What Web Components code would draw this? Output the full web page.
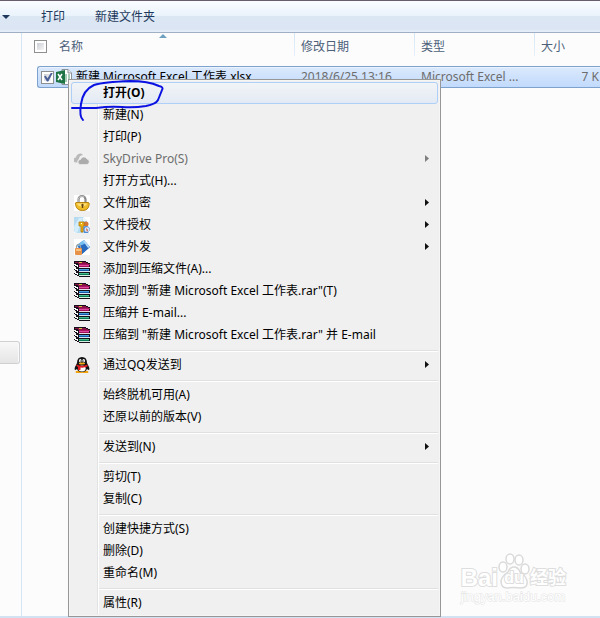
<!DOCTYPE html>
<html lang="zh-CN">
<head>
<meta charset="utf-8">
<title>新建 Microsoft Excel 工作表.xlsx</title>
<style>
  body {
    margin: 0;
    background: #fcfcfc;
    font: 12px/16px "Noto Sans", "Noto Sans CJK SC", sans-serif;
    color: #000;
    overflow: hidden;
  }
</style>
</head>
<body>
<explorer-window>
  <tool-bar slot="toolbar"></tool-bar>
  <nav-pane slot="nav"></nav-pane>
  <file-list></file-list>
  <context-menu slot="overlay">
    <menu-item active>打开(O)</menu-item>
    <menu-item>新建(N)</menu-item>
    <menu-item>打印(P)</menu-item>
    <menu-item icon="cloud" submenu disabled>SkyDrive Pro(S)</menu-item>
    <menu-item>打开方式(H)...</menu-item>
    <menu-item icon="lock" submenu>文件加密</menu-item>
    <menu-item icon="key" submenu>文件授权</menu-item>
    <menu-item icon="send" submenu>文件外发</menu-item>
    <menu-item icon="rar">添加到压缩文件(A)...</menu-item>
    <menu-item icon="rar">添加到 "新建 Microsoft Excel 工作表.rar"(T)</menu-item>
    <menu-item icon="rar">压缩并 E-mail...</menu-item>
    <menu-item icon="rar">压缩到 "新建 Microsoft Excel 工作表.rar" 并 E-mail</menu-item>
    <menu-separator></menu-separator>
    <menu-item icon="qq" submenu>通过QQ发送到</menu-item>
    <menu-separator></menu-separator>
    <menu-item>始终脱机可用(A)</menu-item>
    <menu-item>还原以前的版本(V)</menu-item>
    <menu-separator></menu-separator>
    <menu-item submenu>发送到(N)</menu-item>
    <menu-separator></menu-separator>
    <menu-item>剪切(T)</menu-item>
    <menu-item>复制(C)</menu-item>
    <menu-separator></menu-separator>
    <menu-item>创建快捷方式(S)</menu-item>
    <menu-item>删除(D)</menu-item>
    <menu-item>重命名(M)</menu-item>
    <menu-separator></menu-separator>
    <menu-item>属性(R)</menu-item>
  </context-menu>
  <pen-mark slot="overlay"></pen-mark>
  <site-watermark slot="overlay"></site-watermark>
</explorer-window>

<script>
const ICONS = {
  cloud: `
    <path d="M2 11.500a2.500 2.500 0 0 1 0-5 4 4 0 0 1 7-2.500q-4 .5-4 4-2 1-1.500 3.500z" fill="#b9b9b9"/>
    <path d="M6.500 13.500a2.500 2.500 0 0 1 0-5 3.500 3.500 0 0 1 6.500-.5 2.800 2.800 0 0 1 0 5.500z" fill="#acacac" stroke="#efefef" stroke-width=".7"/>`,
  lock: `
    <rect width="16" height="16" fill="#fff"/>
    <path d="M4.500 8V4.500a3.500 3.500 0 0 1 7 0V8" fill="none" stroke="#8b8b8b" stroke-width="2.200"/>
    <path d="M4.200 8V4.500a3.700 3.700 0 0 1 6-2.500" fill="none" stroke="#d5d5d5" stroke-width=".8"/>
    <path d="M2 7.500h12q1.500 0 1.200 2Q14.500 15.500 8.500 15.500T1.500 9.500Q1 7.500 2 7.500z" fill="#efbd28" stroke="#b88413"/>
    <path d="M3 8.500h10q-1 3-5 3T3 8.500z" fill="#ffe17a"/>
    <path d="M8.500 8.800a1.300 1.300 0 0 1 .7 2.300v2H7.800v-2a1.300 1.300 0 0 1 .7-2.300z" fill="#654312"/>`,
  key: `
    <rect width="16" height="16" fill="#fff"/>
    <path d="M0 0h9l4 4v12H2L0 14z" fill="#b7dcf2"/>
    <path d="M0 10l5-9 4 0-6 15H1z" fill="#d4edfa"/>
    <path d="M9 0v4h4z" fill="#eef8fd"/>
    <circle cx="12" cy="7" r="2.500" fill="#d47837"/>
    <path d="M9 12q0-3 3-3 4 0 4 4l-2 3h-4z" fill="#4e8ed8"/>
    <circle cx="13" cy="12.500" r="2.500" fill="#d8e5f3"/>
    <path d="M5 5h5v4H9v6H7V9H5z" fill="#edb413" stroke="#b57a0c" stroke-width=".8"/>
    <rect x="7" y="6" width="1" height="1" fill="#fff"/>
    <path d="M12 11l2 2-1 2z" fill="#d44c35"/>`,
  send: `
    <rect width="16" height="16" fill="#fff"/>
    <path d="M3 6l7-5 6 7-8 7z" fill="#2e79ce"/>
    <path d="M3 6l7-5 2 3-8 4z" fill="#77bff1"/>
    <path d="M4 7q5 0 8-3l4 4-8 7z" fill="#296abf"/>
    <path d="M10 1l6 7-2 1-5-7z" fill="#b8dcf4"/>
    <path d="M2.500 10V7.500a2 2 0 0 1 4 0V10" fill="none" stroke="#9a9d9f" stroke-width="1.200"/>
    <rect x="1" y="9" width="7" height="7" rx="1" fill="#e6924b"/>
    <rect x="2" y="10" width="5" height="2" fill="#fac381"/>`,
  rar: `
    <g shape-rendering="crispEdges">
      <path d="M0 0h12v1h2v1h2v14H5v-1H3v-1H1v-1H0z" fill="#15101a"/>
      <path d="M1 1h11v1h2v1H4V2H1z" fill="#8a1048"/>
      <path d="M5 1h3v1H5z" fill="#d8c840"/>
      <path d="M5 3h11v1H5z" fill="#a81862"/>
      <path d="M5 4h10v1H5z" fill="#e048a0"/>
      <path d="M5 6h11v1H5z" fill="#e8e0e8"/>
      <path d="M5 5h10v1H5z" fill="#a01058"/>
      <path d="M5 8h10v1H5z" fill="#48a0e0"/>
      <path d="M5 9h10v1H5z" fill="#1458a8"/>
      <path d="M5 10h11v1H5z" fill="#d8e4f0"/>
      <path d="M5 12h10v1H5z" fill="#48c090"/>
      <path d="M5 13h10v1H5z" fill="#087850"/>
      <path d="M5 14h11v1H5z" fill="#d8f0e4"/>
      <path d="M0 3h2v1h2v2H3V5H1V4H0zM0 7h2v1h2v2H3V9H1V8H0zM0 11h2v1h2v2H3v-1H1v-1H0z" fill="#fff"/>
      <path d="M0 5h1v1h1v1H0zM0 9h1v1h1v1H0zM0 13h1v1h2v1h2v1H0z" fill="#f0f0f0"/>
    </g>`,
  qq: `
    <ellipse cx="5" cy="15" rx="3.500" ry="1.300" fill="#f1a10b"/>
    <ellipse cx="11" cy="15" rx="3.500" ry="1.300" fill="#f1a10b"/>
    <path d="M3 6Q3 0 8 0t5 6l2 4q1 3-.5 3L13 12q-1 3-5 3t-5-3l-1.500 1Q0 13 1 10z" fill="#111"/>
    <ellipse cx="8" cy="11.500" rx="3.700" ry="3" fill="#fff"/>
    <ellipse cx="6.300" cy="3.800" rx="1.300" ry="1.800" fill="#fff"/>
    <ellipse cx="9.700" cy="3.800" rx="1.300" ry="1.800" fill="#fff"/>
    <circle cx="6.700" cy="4" r=".6"/><circle cx="9.300" cy="4" r=".6"/>
    <ellipse cx="8" cy="6.500" rx="3.200" ry="1.100" fill="#f5ac16"/>
    <path d="M2.500 7.500Q8 10 13.500 7.500v2Q10 11 6.500 10.500V13H4v-3l-1.500-1z" fill="#e21b22"/>`
}

class BaseElement extends HTMLElement {

  constructor() {
    super()
    const template = document.createElement('template')
    template.innerHTML = this.template()
    this.attachShadow({ mode: 'open' }).appendChild(template.content)
  }

}

class ExplorerWindow extends BaseElement {

  template() {
    return `
      <style>
        :host {
          display: flex;
          flex-direction: column;
          min-height: 100vh;
          position: relative;
        }
        main {
          display: flex;
          flex: 1;
          min-width: 0;
        }
        footer {
          background: #d3e2f3;
          height: 2px;
        }
      </style>
      <slot name="toolbar"></slot>
      <main><slot name="nav"></slot><slot></slot></main>
      <footer></footer>
      <slot name="overlay"></slot>
    `
  }

}

class ToolBar extends BaseElement {

  template() {
    return `
      <style>
        :host {
          align-items: center;
          background: linear-gradient(#fafcff, #e9f2fb 50%, #dce7f4 50%, #dbe5f3 90%, #e6effa);
          border-bottom: 1px solid #a0afc3;
          border-top: 1px solid #695d6b;
          box-sizing: border-box;
          display: flex;
          height: 33px;
        }
        button {
          background: none;
          border: 0;
          color: #1e395b;
          font: inherit;
          padding: 0 15px;
        }
        .more {
          display: flex;
          padding: 0 16px 0 2px;
        }
      </style>
      <button class="more" aria-label="更多"><svg width="8" height="4"><path d="M0 0h8l-4 4z" fill="#1e395b"/></svg></button>
      <button>打印</button>
      <button>新建文件夹</button>
    `
  }

}

class NavPane extends BaseElement {

  template() {
    return `
      <style>
        :host {
          border-right: 1px solid #d6e5f5;
          box-sizing: border-box;
          flex: none;
          padding: 308px 1px 0 0;
          width: 22px;
        }
        div {
          background: linear-gradient(#f8f8f8, #e5e5e5);
          border: 1px solid #d0d0d0;
          border-left: 0;
          border-radius: 0 3px 3px 0;
          box-shadow: inset -1px 0 #fafafa;
          box-sizing: border-box;
          height: 23px;
        }
      </style>
      <div></div>
    `
  }

}

class FileList extends BaseElement {

  template() {
    return `
      <style>
        :host {
          display: block;
          flex: 1;
          min-width: 0;
          overflow: hidden;
        }
        table {
          border-spacing: 0;
          table-layout: fixed;
          width: 100%;
        }
        .name { width: 273px; }
        .meta { width: 120px; }
        th, td {
          padding: 0;
          text-align: left;
          white-space: nowrap;
        }
        th {
          color: #4c607a;
          font-weight: normal;
          height: 33px;
          position: relative;
          vertical-align: top;
        }
        th div {
          align-items: center;
          border-right: 1px solid;
          border-image: linear-gradient(#d5e5f5, #e9f1fa) 1;
          box-sizing: border-box;
          display: flex;
          gap: 12px;
          height: 23px;
          padding: 4px 0 0 6px;
        }
        th:first-child div { padding-left: 12px; }
        th:last-child div { border: 0; }
        .sort {
          left: 50%;
          position: absolute;
          top: 1px;
        }
        td div {
          align-items: center;
          background: linear-gradient(#dbe9fc, #c1dafc);
          border: solid #7da2ce;
          border-width: 1px 0;
          box-shadow: inset 0 1px #eaf3fe;
          box-sizing: border-box;
          color: #6d6d6d;
          display: flex;
          height: 22px;
          padding: 0 6px;
        }
        td:first-child div {
          border-left-width: 1px;
          border-radius: 3px 0 0 3px;
          color: #000;
          margin-left: 15px;
          padding: 0 0 0 3px;
        }
        td:last-child div {
          justify-content: flex-end;
          padding-right: 1px;
        }
        td svg { margin: 0 4px 0 2px; }
        input {
          appearance: none;
          background: linear-gradient(135deg, #cbcfd5, #f6f6f6) content-box, #fff;
          border: 1px solid #8e8f8f;
          box-sizing: border-box;
          flex: none;
          height: 13px;
          margin: 0;
          padding: 2px;
          width: 13px;
        }
        input:checked::after {
          background: #4a5f97;
          clip-path: polygon(0 45%, 18% 35%, 40% 65%, 78% 0, 100% 0, 48% 100%, 32% 100%);
          content: "";
          display: block;
          height: 9px;
          margin: -1px 0 0 0;
          width: 9px;
        }
      </style>
      <table>
        <colgroup><col class="name"><col class="meta"><col class="meta"><col></colgroup>
        <thead>
          <tr>
            <th><div><input type="checkbox" id="all"><label for="all">名称</label></div>
              <svg class="sort" width="8" height="4"><path d="M0 4l4-4 4 4z" fill="#6ea0c0"/></svg></th>
            <th><div>修改日期</div></th>
            <th><div>类型</div></th>
            <th><div>大小</div></th>
          </tr>
        </thead>
        <tbody>
          <tr>
            <td><div>
              <input type="checkbox" id="file" checked>
              <svg width="16" height="16">
                <path d="M6 .5h6l3.500 3.500v11.500H6z" fill="#fff" stroke="#8c9299"/>
                <path d="M12 .5V4h3.500" fill="#eee" stroke="#8c9299"/>
                <path d="M9 6h2M12 6h2M9 8h2M12 8h2M9 10h2M12 10h2M9 12h2M12 12h2" stroke="#4e9b70"/>
                <path d="M0 3l9-2v14l-9-2z" fill="#1f7446"/>
                <path d="M2 5l4 6M6 5l-4 6" stroke="#fff" stroke-width="1.500"/>
              </svg>
              <label for="file">新建 Microsoft Excel 工作表.xlsx</label>
            </div></td>
            <td><div>2018/6/25 13:16</div></td>
            <td><div>Microsoft Excel ...</div></td>
            <td><div>7 K</div></td>
          </tr>
        </tbody>
      </table>
    `
  }

}

class ContextMenu extends BaseElement {

  template() {
    return `
      <style>
        :host {
          background: linear-gradient(90deg, transparent 26px, #e2e3e3 26px, #e2e3e3 27px, #fff 27px, #fff 28px, transparent 28px) content-box, #f0f0f0;
          border: 1px solid #979797;
          box-shadow: inset 0 0 0 1px #f5f5f5;
          box-sizing: border-box;
          left: 68px;
          padding: 2px;
          position: absolute;
          top: 79px;
          width: 373px;
        }
      </style>
      <div role="menu"><slot></slot></div>
    `
  }

}

class MenuItem extends BaseElement {

  template() {
    return `
      <style>
        :host { display: block; }
        button {
          align-items: center;
          background: none;
          border: 1px solid transparent;
          border-radius: 3px;
          box-sizing: border-box;
          color: #000;
          display: flex;
          font: inherit;
          height: 22px;
          padding: 0 8px 0 2px;
          text-align: left;
          white-space: nowrap;
          width: 100%;
        }
        :host([active]) button {
          background: linear-gradient(#f2f4f6, #e3eaf5);
          border-color: #aecff7;
          font-weight: bold;
        }
        button:disabled { color: #6d6d6d; }
        .icon {
          flex: none;
          height: 16px;
          margin-right: 13px;
          width: 16px;
        }
        .label { flex: 1; }
        .arrow { display: none; }
        :host([submenu]) .arrow { display: block; }
        button:disabled .arrow { opacity: .5; }
      </style>
      <button role="menuitem">
        <svg class="icon" viewBox="0 0 16 16"></svg>
        <span class="label"><slot></slot></span>
        <svg class="arrow" width="4" height="8"><path d="M0 0l4 3.500-4 3.500z" fill="#111"/></svg>
      </button>
    `
  }

  connectedCallback() {
    this.shadowRoot.querySelector('.icon').innerHTML = ICONS[this.getAttribute('icon')] || ''
    this.shadowRoot.querySelector('button').disabled = this.hasAttribute('disabled')
  }

}

class MenuSeparator extends BaseElement {

  template() {
    return `
      <style>
        :host {
          display: block;
          padding: 4px 0 2px 28px;
        }
        hr {
          background: #fff;
          border: 0;
          border-top: 1px solid #e0e0e0;
          height: 1px;
          margin: 0;
        }
      </style>
      <hr>
    `
  }

}

class PenMark extends BaseElement {

  template() {
    return `
      <style>
        :host {
          left: 68px;
          pointer-events: none;
          position: absolute;
          top: 76px;
        }
        svg { display: block; }
      </style>
      <svg width="100" height="50" fill="none" stroke="#0b12e2" stroke-width="2" stroke-linecap="round" stroke-linejoin="round">
        <path d="M15 44Q11 41 13 28Q15 14 26 9Q36 6 62 5Q80 5 91 10Q96 11 94 14L90 24Q88 28 78 30Q66 32 54 31Q42 30 28 32L4 32"/>
      </svg>
    `
  }

}

class SiteWatermark extends BaseElement {

  template() {
    return `
      <style>
        :host {
          bottom: 13px;
          color: #fff;
          font-family: "Liberation Sans", "Noto Sans CJK SC", sans-serif;
          paint-order: stroke;
          position: absolute;
          right: 34px;
          -webkit-text-stroke: 2px #dedede;
        }
        .logo {
          align-items: flex-end;
          display: flex;
          font-size: 18px;
          font-weight: bold;
          line-height: 22px;
        }
        .paw {
          display: grid;
          height: 36px;
          width: 32px;
        }
        .bai { font-size: 24px; }
        .paw > * { grid-area: 1 / 1; }
        .paw span {
          align-self: end;
          font-size: 16px;
          text-align: center;
        }
        .url {
          font-size: 13px;
          line-height: 16px;
          -webkit-text-stroke: 1px #e4e4e4;
        }
      </style>
      <div class="logo">
        <span class="bai">Bai</span>
        <span class="paw">
          <svg width="32" height="36" fill="#fff" stroke="#dadada" stroke-width="1.500" style="paint-order: normal">
            <ellipse cx="12" cy="6" rx="4" ry="5"/><ellipse cx="21" cy="7" rx="4" ry="5"/>
            <ellipse cx="5" cy="14" rx="4" ry="5"/><ellipse cx="27" cy="16" rx="4" ry="5"/>
            <path d="M16 14q4 0 6 5 6 4 7 9 1 7-6 7-7-1-14 0-6 0-6-7 1-5 7-9 2-5 6-5z"/>
          </svg>
          <span>du</span>
        </span>
        <span>经验</span>
      </div>
      <div class="url">jingyan.baidu.com</div>
    `
  }

}

customElements.define('explorer-window', ExplorerWindow)
customElements.define('tool-bar', ToolBar)
customElements.define('nav-pane', NavPane)
customElements.define('file-list', FileList)
customElements.define('context-menu', ContextMenu)
customElements.define('menu-item', MenuItem)
customElements.define('menu-separator', MenuSeparator)
customElements.define('pen-mark', PenMark)
customElements.define('site-watermark', SiteWatermark)
</script>
</body>
</html>
